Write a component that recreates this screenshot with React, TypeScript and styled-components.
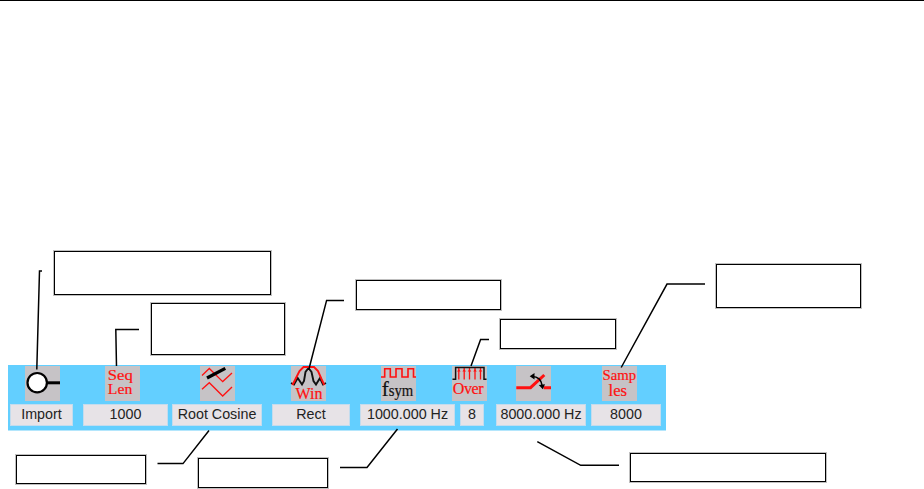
import { ReactNode } from "react";
import styled, { createGlobalStyle } from "styled-components";

interface ToolItem {
    label: string;
    width: number;
    gap: number;
    iconLeft: number;
    icon: ReactNode;
}

interface Note {
    left: number;
    top: number;
    width: number;
    height: number;
}

const RED = "#ff1010";

const ImportIcon = () => (
    <Icon viewBox="0 0 35 35">
        <circle cx="12.2" cy="16.7" r="9.7" fill="#fff" stroke="#000" strokeWidth="2.2" />
        <path d="M22 16.8H35" stroke="#000" strokeWidth="3" />
    </Icon>
);

const SeqLenIcon = () => (
    <Icon viewBox="0 0 35 35">
        <IconText x="2.8" y="14" $size={15.5} textLength="25" lengthAdjust="spacingAndGlyphs">Seq</IconText>
        <IconText x="2.8" y="28.4" $size={15.5} textLength="24.5" lengthAdjust="spacingAndGlyphs">Len</IconText>
    </Icon>
);

const FilterIcon = () => (
    <Icon viewBox="0 0 35 35">
        <path d="M2 9.5L9.3 2.5L22.7 15.6L32 7M2 23.3L9.3 16.7L22.7 30L32 21" fill="none" stroke={RED} strokeWidth="1.3" />
        <path d="M7 12L25.3 2.4" stroke="#000" strokeWidth="3.3" />
    </Icon>
);

const WindowIcon = () => (
    <Icon viewBox="0 0 35 35">
        <path d="M0 17L3 18.5L6.7 12L11 18.5L13 15L14.5 6L17.5 2L20.5 6L22.5 15L25 18.5L29 12L32 18.5L35 17" fill="none" stroke="#111" strokeWidth="1.9" />
        <path d="M1.5 19L4.5 13L8.5 5L12.5 1H23L27 5L30.5 13L33.3 19" fill="none" stroke={RED} strokeWidth="1.9" />
        <IconText x="4.5" y="32.6" textLength="27">Win</IconText>
    </Icon>
);

const SymbolIcon = () => (
    <Icon viewBox="0 0 35 35">
        <path d="M0 11H3.7V2.7H9.3V11H15V2.7H21V11H27V2.7H32.5V11H35" fill="none" stroke={RED} strokeWidth="1.6" />
        <IconText x="0.8" y="29.6" $size={21} $color="#111">f</IconText>
        <IconText x="7.8" y="30.2" textLength="24.5" lengthAdjust="spacingAndGlyphs" $color="#111">sym</IconText>
    </Icon>
);

const OverIcon = () => (
    <Icon viewBox="0 0 35 35">
        <path d="M6.8 2V13.5M12.2 2V13.5M17.5 2V13.5M23 2V13.5M28.5 2V13.5" stroke={RED} strokeWidth="1.3" />
        <path d="M5 5.5L6.8 3L8.6 5.5M10.4 5.5L12.2 3L14 5.5M15.7 5.5L17.5 3L19.3 5.5M21.2 5.5L23 3L24.8 5.5M26.7 5.5L28.5 3L30.3 5.5" fill={RED} />
        <path d="M0.5 13.3H3.6V1.5H32V13.3H34.5" fill="none" stroke="#111" strokeWidth="1.5" />
        <IconText x="0.7" y="28.4" textLength="31">Over</IconText>
    </Icon>
);

const SwitchIcon = () => (
    <Icon viewBox="0 0 35 35">
        <path d="M0.3 21.7H14.5L28.3 9M27.7 21.7H35" fill="none" stroke={RED} strokeWidth="3" />
        <path d="M16 10.5Q25 10.5 26.3 20" fill="none" stroke="#000" strokeWidth="1.5" />
        <path d="M13.7 10.2L18.5 7V13.5ZM26.8 23.2L22.8 19L29 18.2Z" fill="#000" />
    </Icon>
);

const SamplesIcon = () => (
    <Icon viewBox="0 0 35 35">
        <IconText x="0.6" y="14" $size={15.5} textLength="33.6" lengthAdjust="spacingAndGlyphs">Samp</IconText>
        <IconText x="6.6" y="30" textLength="18.5" lengthAdjust="spacingAndGlyphs">les</IconText>
    </Icon>
);

const tools: ToolItem[] = [
    { label: "Import", width: 63, gap: 2, iconLeft: 15, icon: <ImportIcon /> },
    { label: "1000", width: 85, gap: 10, iconLeft: 22, icon: <SeqLenIcon /> },
    { label: "Root Cosine", width: 90, gap: 4, iconLeft: 28, icon: <FilterIcon /> },
    { label: "Rect", width: 78, gap: 10, iconLeft: 19, icon: <WindowIcon /> },
    { label: "1000.000 Hz", width: 95, gap: 10, iconLeft: 21, icon: <SymbolIcon /> },
    { label: "8", width: 24, gap: 5, iconLeft: -8, icon: <OverIcon /> },
    { label: "8000.000 Hz", width: 90, gap: 12, iconLeft: 20, icon: <SwitchIcon /> },
    { label: "8000", width: 70, gap: 5, iconLeft: 11, icon: <SamplesIcon /> },
];

const notes: Note[] = [
    { left: 54, top: 251, width: 217, height: 44 },
    { left: 151, top: 303, width: 134, height: 52 },
    { left: 356, top: 280, width: 145, height: 30 },
    { left: 500, top: 319, width: 116, height: 30 },
    { left: 716, top: 264, width: 145, height: 44 },
    { left: 16, top: 455, width: 130, height: 29 },
    { left: 198, top: 458, width: 130, height: 30 },
    { left: 630, top: 453, width: 196, height: 29 },
];

const leaders = [
    "42,271 39.5,271 36.8,369.5",
    "139,329.4 115.8,329.4 116.5,366",
    "157.5,463.6 183,463.6 209,430.5",
    "344,300.4 326.6,300.4 308.7,370",
    "340,467.5 367,467.5 397.5,429",
    "489,339.4 480.6,339.4 471,366",
    "537.3,441.7 580.7,465.3 619,465.3",
    "705,284.1 667,284.1 621.2,367.5",
];

const App = () => {
    return (
        <Page>
            <GlobalStyle />

            <Toolbar>
                {tools.map((tool, i) => (
                    <Tool key={i} $width={tool.width} $gap={tool.gap}>
                        <IconButton $left={tool.iconLeft}>{tool.icon}</IconButton>
                        <Field>{tool.label}</Field>
                    </Tool>
                ))}
            </Toolbar>

            {/* callouts sit on top of the toolbar */}
            {notes.map((note, i) => (
                <NoteBox key={i} $note={note} />
            ))}
            <Leaders viewBox="0 0 924 489">
                {leaders.map((points) => (
                    <polyline key={points} points={points} />
                ))}
            </Leaders>
        </Page>
    );
};

const GlobalStyle = createGlobalStyle`
    body{
        margin:0;
        background:#fff;
    }
`;

const Page = styled.div`
    position:relative;
    box-sizing:border-box;
    width:924px;
    height:489px;
    padding:364px 0 0 8px;
    border-top:1px solid #000;
    overflow:hidden;
    font-family:"Liberation Sans", Arial, sans-serif;
`;

const Toolbar = styled.div`
    display:flex;
    box-sizing:border-box;
    width:658px;
    height:66px;
    padding-top:1px;
    background:#63cfff;
    border-bottom:1px solid #b4e6fc;
`;

const Tool = styled.div<{ $width: number; $gap: number }>`
    flex:none;
    width:${({ $width }) => $width}px;
    margin-left:${({ $gap }) => $gap}px;
`;

const IconButton = styled.div<{ $left: number }>`
    width:35px;
    height:35px;
    margin-left:${({ $left }) => $left}px;
    background:#c6c3c6;
`;

const Icon = styled.svg`
    display:block;
    width:35px;
    height:35px;
    overflow:visible;
`;

const IconText = styled.text<{ $size?: number; $color?: string }>`
    font-family:"Liberation Serif", "Times New Roman", serif;
    font-size:${({ $size }) => $size || 16}px;
    fill:${({ $color }) => $color || RED};
    stroke:${({ $color }) => $color || RED};
    stroke-width:0.2;
`;

const Field = styled.div`
    box-sizing:border-box;
    height:22px;
    margin-top:3px;
    border:1px solid #c3dcee;
    background:#e7e3e7;
    color:#222;
    font-size:14.3px;
    line-height:19px;
    text-align:center;
    white-space:nowrap;
`;

const NoteBox = styled.div<{ $note: Note }>`
    position:absolute;
    box-sizing:border-box;
    left:${({ $note }) => $note.left}px;
    top:${({ $note }) => $note.top - 1}px;
    width:${({ $note }) => $note.width}px;
    height:${({ $note }) => $note.height}px;
    border:1px solid #000;
    box-shadow:0 0 0 1px rgba(0, 0, 0, .25);
    background:#fff;
`;

const Leaders = styled.svg`
    position:absolute;
    left:0;
    top:-1px;
    width:924px;
    height:489px;
    fill:none;
    stroke:#000;
    stroke-width:1.5;
`;

export default App;
